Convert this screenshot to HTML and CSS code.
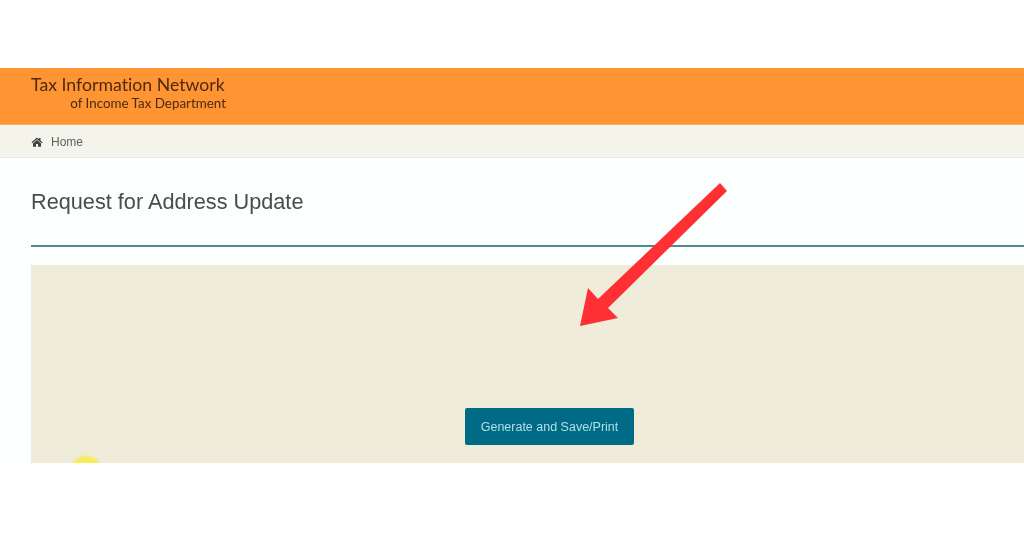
FILE: index.html
```html
<!DOCTYPE html>
<html lang="en">
<head>
<meta charset="utf-8">
<title>Request for Address Update</title>
<link rel="stylesheet" href="styles.css">
</head>
<body>
<div class="page">
  <header class="brand">
    <div class="brand-text">
      <div class="brand-title">Tax Information Network</div>
      <div class="brand-sub">of Income Tax Department</div>
    </div>
  </header>
  <nav class="crumbs">
    <svg class="home-icon" viewBox="0 0 24 20" width="12" height="10" aria-hidden="true">
      <path d="M12 1 L1 10.5 L2.6 12.3 L12 4.3 L21.4 12.3 L23 10.5 L19 7 V2 H16 V4.4 Z"/>
      <path d="M12 6 L4 12.8 V19.5 H10 V14 H14 V19.5 H20 V12.8 Z"/>
    </svg>
    <span class="home-label">Home</span>
  </nav>
  <main class="content">
    <h1 class="title">Request for Address Update</h1>
    <div class="rule"></div>
    <section class="panel">
      <button class="action" type="button">Generate and Save/Print</button>
      <span class="cursor-spot"></span>
    </section>
    <svg class="arrow" viewBox="0 0 1024 536" width="1024" height="536" aria-hidden="true">
      <polygon points="720,183 727,191 608,308 618,318 580,326 588,288 598,299"/>
    </svg>
  </main>
</div>
</body>
</html>
```
FILE: styles.css
```css
* { box-sizing: border-box; }
html, body { margin: 0; background: #fff; }
.page {
  width: 1024px;
  height: 536px;
  padding-top: 68px;
  overflow: hidden;
  font-family: "Liberation Sans", Arial, sans-serif;
}
.brand {
  height: 57px;
  background: #fe9432;
  padding: 7px 0 0 31px;
  box-shadow: inset 0 -1px 0 #fbb060;
}
.brand-text {
  width: 195px;
  font-family: "Lato", sans-serif;
  font-variant-ligatures: none;
  color: #4d2a12;
  filter: blur(0.35px);
}
.brand-title {
  font-size: 17.7px;
  line-height: 20px;
  white-space: nowrap;
}
.brand-sub {
  font-size: 13.4px;
  line-height: 16px;
  text-align: right;
  white-space: nowrap;
}
.crumbs {
  height: 33px;
  background: #f5f4ea;
  border-bottom: 1px solid #e9e9e2;
  padding: 1px 0 0 31px;
  display: flex;
  align-items: center;
  gap: 8px;
}
.home-icon { fill: #3c4240; }
.home-label {
  font-size: 12px;
  color: #5a5f5e;
  filter: blur(0.3px);
}
.content {
  height: 305px;
  background: #fbfffd;
  padding: 31px 0 0 31px;
  overflow: hidden;
}
.title {
  margin: 0;
  font-size: 21.7px;
  line-height: 26px;
  font-weight: 400;
  color: #484e4c;
  filter: blur(0.3px);
}
.rule {
  height: 2px;
  margin-top: 30px;
  background: #4f8a8c;
}
.panel {
  position: relative;
  height: 198px;
  margin-top: 18px;
  background: #efecd9;
  padding: 143px 0 0 434px;
  overflow: hidden;
}
.action {
  display: block;
  width: 169px;
  height: 37px;
  border: 0;
  border-radius: 2px;
  background: #006b87;
  color: #b5dfe2;
  font: 12.5px "Liberation Sans", Arial, sans-serif;
  padding: 0;
  filter: blur(0.25px);
}
.cursor-spot {
  position: absolute;
  left: 40px;
  top: 191px;
  width: 30px;
  height: 26px;
  border-radius: 50%;
  background: #f5ec58;
  filter: blur(1px);
}
.arrow {
  position: absolute;
  left: 0;
  top: 0;
  pointer-events: none;
}
.arrow polygon { fill: #fe3033; }
```
